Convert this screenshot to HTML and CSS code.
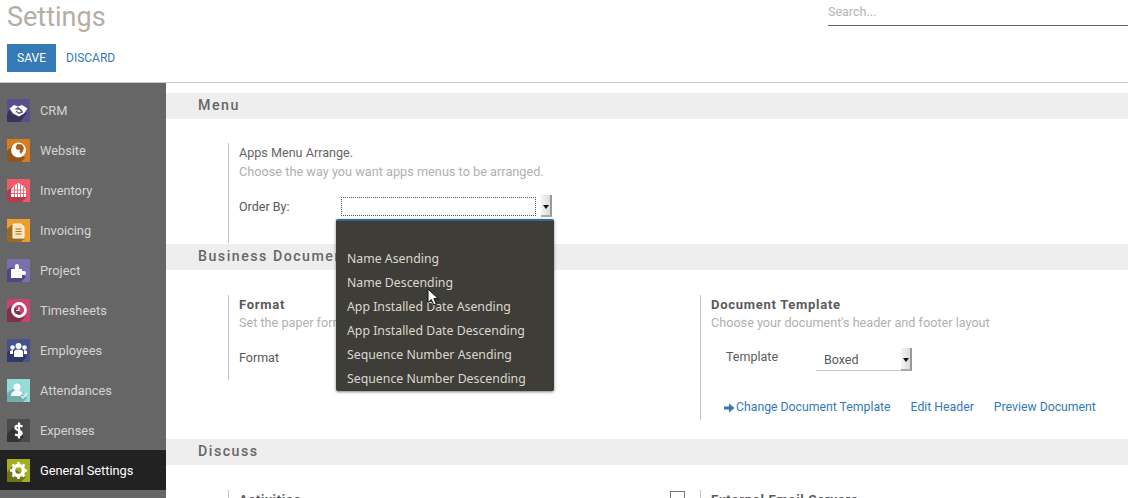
FILE: index.html
```html
<!DOCTYPE html>
<html lang="en">
<head>
<meta charset="utf-8">
<title>Settings</title>
<link rel="stylesheet" href="styles.css">
</head>
<body>
<header class="topbar">
  <div class="top-row">
    <h1 class="title">Settings</h1>
    <div class="search">Search...</div>
  </div>
  <div class="actions">
    <button class="btn-save">SAVE</button>
    <a class="btn-discard">DISCARD</a>
  </div>
</header>
<div class="body">
  <nav class="sidebar">
    <a class="nav-item">
      <svg class="app" viewBox="0 0 23 23"><rect width="23" height="23" fill="#5b4e8c"/><path d="M0 23V15L3 10 20 14 13 23Z" fill="#3a3258"/><path d="M2.500 9.500 7 6 11 7.500 15 6 20.500 9.500 17 14.500 12 17.500 6 14.500Z" fill="#fff"/><path d="M7 10.500 11 8 15 11 16 13.500 12 15 8.500 12.500 11.500 10.500" fill="#5b4e8c"/><path d="M9.500 12 12 10.500 14 12.500 12 13.500Z" fill="#fff"/></svg>
      <span>CRM</span>
    </a>
    <a class="nav-item">
      <svg class="app" viewBox="0 0 23 23"><rect width="23" height="23" fill="#d97b1f"/><path d="M0 23V12L6 6 18 19 14 23Z" fill="#8f5420"/><circle cx="11.500" cy="11" r="7.500" fill="#fff"/><path d="M10.500 5 15 5.500 17 9 16 12 14 15 12.500 13 13 11 9.500 10.500 8.500 8Z" fill="#a5601f"/></svg>
      <span>Website</span>
    </a>
    <a class="nav-item">
      <svg class="app" viewBox="0 0 23 23"><rect width="23" height="23" fill="#ee5c6c"/><path d="M0 23V12L5 8 20 18 15 23Z" fill="#b73c4b"/><path d="M4 10 8 6 11.500 4 15 6 19 10V18H4Z" fill="#fff"/><path d="M7.500 7V18M10.500 5V18M13.500 5V18M16.500 8V18M4 11H19M4 14.500H19" stroke="#ee5c6c" stroke-width=".9"/></svg>
      <span>Inventory</span>
    </a>
    <a class="nav-item">
      <svg class="app" viewBox="0 0 23 23"><rect width="23" height="23" fill="#eb9f2c"/><path d="M0 23V10L6 5 18 19 14 23Z" fill="#9a6a22"/><path d="M6 5H14L17 8V19H6Z" fill="#fbe3b5" stroke="#fff"/><path d="M8.500 10H14.500M8.500 12.500H14.500M8.500 15H14.500" stroke="#a5732a" stroke-width="1.200"/></svg>
      <span>Invoicing</span>
    </a>
    <a class="nav-item">
      <svg class="app" viewBox="0 0 23 23"><rect width="23" height="23" fill="#7c6fae"/><path d="M0 23V11L4 8 19 18 14 23Z" fill="#4f4685"/><path d="M4 10H8V7A2 2 0 0 1 12 7V10H15V12A2 2 0 0 1 15 16V19H4Z" fill="#fff"/><circle cx="17" cy="14" r="2" fill="#fff"/></svg>
      <span>Project</span>
    </a>
    <a class="nav-item">
      <svg class="app" viewBox="0 0 23 23"><rect width="23" height="23" fill="#c9436f"/><path d="M0 23V11L5 6 18 18 13 23Z" fill="#80304c"/><circle cx="12" cy="11" r="6.500" fill="none" stroke="#fff" stroke-width="2.800"/><path d="M12 8V11.500H9" fill="none" stroke="#fff" stroke-width="1.200"/></svg>
      <span>Timesheets</span>
    </a>
    <a class="nav-item">
      <svg class="app" viewBox="0 0 23 23"><rect width="23" height="23" fill="#46528f"/><path d="M0 23V13L4 10 20 17 15 23Z" fill="#2f3868"/><circle cx="11.500" cy="7" r="3" fill="#fff"/><circle cx="5.500" cy="8.500" r="2.200" fill="#fff"/><circle cx="17.500" cy="8.500" r="2.200" fill="#fff"/><path d="M7 18V13Q7 10.500 11.500 10.500 16 10.500 16 13V18Z" fill="#fff"/><path d="M3 15V12.500Q3 11 6 11V15ZM20 15V12.500Q20 11 17 11V15Z" fill="#fff"/></svg>
      <span>Employees</span>
    </a>
    <a class="nav-item">
      <svg class="app" viewBox="0 0 23 23"><rect width="23" height="23" fill="#96dbd8"/><path d="M0 23V14L6 10 20 19 16 23Z" fill="#6fb0ae"/><circle cx="10" cy="8" r="3.500" fill="#fff"/><path d="M4 17Q4 11.500 10 11.500 15 11.500 15 15L13 17Z" fill="#fff"/><path d="M14 17 16 19 20 14" fill="none" stroke="#e4f6f5" stroke-width="1.300"/></svg>
      <span>Attendances</span>
    </a>
    <a class="nav-item">
      <svg class="app" viewBox="0 0 23 23"><rect width="23" height="23" fill="#4a4a4a"/><path d="M0 23V15L8 7 17 18 12 23Z" fill="#333"/><path d="M15.500 7.500Q12 5.800 9.500 7 7.500 8.200 9 10 10 11 12.500 11.800 15 13 14.500 15 13 17.500 8 15.500M12 3.500V19.500" fill="none" stroke="#fff" stroke-width="2.200"/></svg>
      <span>Expenses</span>
    </a>
    <a class="nav-item is-active">
      <svg class="app" viewBox="0 0 23 23"><rect width="23" height="23" fill="#a5ae1e"/><path d="M0 23V13L5 8 19 18 14 23Z" fill="#6f7514"/><circle cx="11.500" cy="11.500" r="5" fill="none" stroke="#fff" stroke-width="3.600"/><path d="M11.500 3V20M3 11.500H20M5.500 5.500 17.500 17.500M17.500 5.500 5.500 17.500" stroke="#fff" stroke-width="2.600" stroke-dasharray="2.600 11.800 2.600"/></svg>
      <span>General Settings</span>
    </a>
  </nav>
  <main class="main">
    <h2 class="band band-menu">Menu</h2>
    <section class="row row-menu">
      <div class="setting">
        <div class="strong-plain">Apps Menu Arrange.</div>
        <div class="muted">Choose the way you want apps menus to be arranged.</div>
        <div class="field field-order">
          <label class="field-label label-order">Order By:</label>
          <div class="focus-select"></div>
          <div class="spin"><i></i></div>
        </div>
      </div>
    </section>
    <h2 class="band band-doc">Business Documents</h2>
    <section class="row row-doc">
      <div class="setting col-left">
        <div class="strong">Format</div>
        <div class="muted">Set the paper format of printed documents</div>
        <div class="field field-format">
          <label class="field-label label-format">Format</label>
        </div>
      </div>
      <div class="setting col-right">
        <div class="strong">Document Template</div>
        <div class="muted">Choose your document's header and footer layout</div>
        <div class="field field-template">
          <label class="field-label label-template">Template</label>
          <div class="select-line"><span>Boxed</span><div class="spin spin-template"><i></i></div></div>
        </div>
        <div class="links">
          <a class="link link-first"><svg class="arrow" viewBox="0 0 12 12"><path d="M1 4.600H6V1.500L11.500 6 6 10.500V7.400H1Z" fill="#337ab7"/></svg>Change Document Template</a>
          <a class="link">Edit Header</a>
          <a class="link">Preview Document</a>
        </div>
      </div>
    </section>
    <h2 class="band band-discuss">Discuss</h2>
    <section class="row row-discuss">
      <div class="setting col-left col-activities">
        <div class="strong">Activities</div>
        <span class="checkbox"></span>
      </div>
      <div class="setting col-right">
        <div class="strong">External Email Servers</div>
      </div>
    </section>
  </main>
</div>
<ul class="dropdown">
  <li>Name Asending</li>
  <li>Name Descending</li>
  <li>App Installed Date Asending</li>
  <li>App Installed Date Descending</li>
  <li>Sequence Number Asending</li>
  <li>Sequence Number Descending</li>
</ul>
<svg class="cursor" viewBox="0 0 13 18"><path d="M1 1V14.500L4.300 11.500 6.800 17 9.300 15.800 6.800 10.600H11.200Z" fill="#fff" stroke="#111"/></svg>
</body>
</html>
```
FILE: styles.css
```css
* { box-sizing: border-box; }
html, body { margin: 0; height: 498px; overflow: hidden; background: #fff; }
body { font-family: Roboto, "Liberation Sans", sans-serif; font-size: 13px; color: #4c4c4c; }

.topbar { height: 83px; border-bottom: 1px solid #c8c8c8; padding: 0 0 0 7px; }
.top-row { display: flex; justify-content: space-between; align-items: flex-start; height: 44px; }
.title { margin: 0; font-size: 27px; font-weight: 400; line-height: 34px; color: #b4aea6; }
.search { width: 300px; height: 26px; border-bottom: 1px solid #666; color: #b5b5b5; font-size: 12.500px; line-height: 24px; }
.actions { display: flex; align-items: center; }
.btn-save { width: 49px; height: 28px; border: 0; padding: 0; background: #337ab7; color: #fff; font: 12px Roboto, sans-serif; }
.btn-discard { margin-left: 10px; color: #337ab7; font-size: 12px; }

.body { display: flex; height: 415px; overflow: hidden; }
.sidebar { width: 166px; flex: none; background: #666; padding-top: 7px; }
.nav-item { display: flex; align-items: center; height: 40px; padding-left: 7px; color: #d4d4d4; font-size: 12.800px; }
.nav-item span { margin-left: 10px; }
.nav-item.is-active { background: #222; color: #fff; }
.app { width: 23px; height: 23px; flex: none; }

.main { flex: 1; min-width: 0; padding-top: 10px; }
.band { margin: 0; height: 26px; padding-left: 32px; background: #eee; color: #666; font-size: 14.200px; font-weight: 500; line-height: 24px; letter-spacing: 1.500px; }
.row { display: flex; }
.row-menu { height: 125px; padding: 24px 0 0 62px; }
.row-doc { height: 169px; padding: 25px 0 0 62px; }
.row-discuss { padding: 25px 0 0 62px; }
.setting { border-left: 1px solid #c4c4c4; padding-left: 10px; line-height: 19px; }
.row-menu .setting { height: 100px; width: 420px; }
.col-left { width: 472px; height: 85px; }
.col-right { width: 427px; height: 125px; }
.col-activities { position: relative; height: 40px; }
.strong-plain { color: #666; font-size: 12.600px; }
.strong { color: #5a5a5a; font-weight: 700; font-size: 13px; line-height: 20px; margin-bottom: -2px; letter-spacing: .72px; }
.muted { color: #b0b0b0; font-size: 12.650px; }
.row-menu .muted { font-size: 12.720px; }

.field { display: flex; align-items: center; }
.field-label { color: #5a5a5a; font-size: 12.500px; }
.field-order { margin-top: 14px; height: 22px; }
.label-order { width: 102px; }
.focus-select { width: 195px; height: 19px; border: 1px dotted #555; }
.spin { position: relative; width: 11px; height: 22px; margin-left: 5px; background: linear-gradient(90deg, #f4f4f4, #dcdcdc); border-right: 2px solid #999; border-bottom: 2px solid #aaa; }
.spin i { position: absolute; left: 2px; top: 10px; border: 3px solid transparent; border-top: 4px solid #111; border-bottom: 0; }
.field-format { margin-top: 16px; }
.field-template { margin-top: 16px; padding-left: 15px; height: 23px; align-items: flex-start; }
.label-template { width: 90px; line-height: 17px; }
.select-line { position: relative; display: flex; align-items: center; width: 96px; height: 23px; border-bottom: 1px solid #c4c4c4; padding-left: 8px; color: #5a5a5a; font-size: 12.500px; }
.spin-template { position: absolute; right: 0; top: 0; margin: 0; height: 23px; }
.links { display: flex; margin-top: 27px; padding-left: 12px; font-size: 12.250px; color: #337ab7; white-space: nowrap; }
.link { margin-right: 20px; display: flex; align-items: center; }
.arrow { width: 12px; height: 12px; margin-right: 1px; }

.checkbox { position: absolute; right: 15px; top: 1px; width: 15px; height: 15px; border: 1px solid #777; }

.dropdown { position: absolute; left: 336px; top: 219px; width: 218px; height: 172px; margin: 0; padding: 26px 0 0 11px; list-style: none; background: #3f3d37; border-top: 2px solid #2b6a99; border-radius: 2px; box-shadow: 0 1px 3px rgba(0,0,0,.5); color: #dbd8d0; font-family: "Noto Sans", sans-serif; font-size: 12.300px; }
.dropdown li { height: 24px; line-height: 24px; white-space: nowrap; }
.cursor { position: absolute; left: 427px; top: 288px; width: 13px; height: 18px; }
```
